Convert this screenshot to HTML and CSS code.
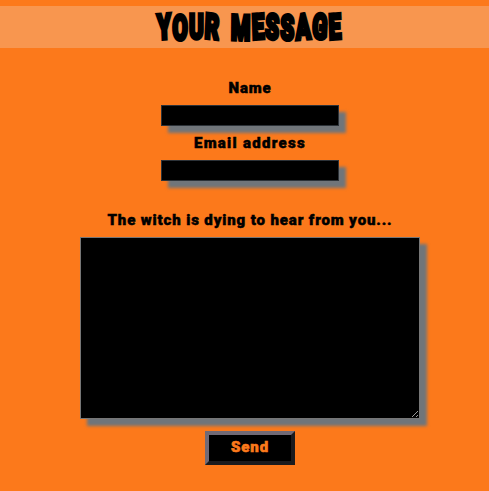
FILE: index.html
```
<!DOCTYPE html>
<html lang="en">
<head>
<meta charset="utf-8">
<title>Your message</title>
<link rel="stylesheet" href="styles.css">
</head>
<body>
<h1 class="title"><span class="title-text"><span class="left">Y</span><span class="low">O</span>U<span class="right">R</span> <span class="low">M</span><span class="left">E</span><span class="right">S</span><span class="low">S</span><span class="left">A</span><span class="right">G</span><span class="left">E</span></span></h1>
<form class="form">
<label class="label name" for="name">Name</label>
<input class="field" id="name" type="text">
<label class="label email" for="email">Email address</label>
<input class="field" id="email" type="text">
<label class="label message-label" for="message">The witch is dying to hear from you...</label>
<textarea class="message" id="message"></textarea>
<button class="send" type="button">Send</button>
</form>
</body>
</html>
```
FILE: styles.css
```
* { box-sizing: border-box; }
body {
  margin: 0;
  padding-top: 6px;
  height: 491px;
  overflow: hidden;
  background: #fc791b;
  color: #000;
  font-family: Roboto, "Liberation Sans", sans-serif;
}
.title {
  display: flex;
  justify-content: center;
  margin: 0;
  padding-left: 10px;
  height: 42px;
  background: #f8964f;
  font-size: 35px;
  line-height: 44px;
  font-weight: 900;
  white-space: nowrap;
}
.title-text {
  display: block;
  transform: scaleX(0.635);
  letter-spacing: 2px;
  word-spacing: 5px;
  -webkit-text-stroke: 3.6px #000;
}
.left, .right, .low { display: inline-block; }
.left { transform: rotate(-3deg); }
.right { transform: rotate(4deg); }
.low { transform: translateY(1px) rotate(1deg); }
.form {
  display: flex;
  flex-direction: column;
  align-items: center;
  width: 340px;
  margin: 30px 0 0 80px;
}
.label {
  height: 20px;
  margin-bottom: 7px;
  font-size: 15px;
  line-height: 20px;
  font-weight: 900;
  white-space: nowrap;
  -webkit-text-stroke: 0.5px #000;
}
.name { letter-spacing: 0.8px; }
.email { letter-spacing: 1.3px; }
.message-label { letter-spacing: 0.87px; margin-top: 22px; }
.field {
  width: 178px;
  height: 21px;
  margin: 0 0 7px;
  border: 1px solid #2c3238;
  background: #000;
  color: #fc791b;
  box-shadow: 7px 7px 3px #70757a;
}
.message {
  display: block;
  width: 340px;
  height: 182px;
  margin: 0;
  border: 1px solid #767676;
  background: #000;
  color: #fc791b;
  resize: both;
  box-shadow: 7px 7px 3px #70757a;
}
.send {
  width: 90px;
  height: 34px;
  margin: 12px 0 0;
  padding: 0 0 2px;
  border: 4px solid;
  border-color: #716a76 #1b1b1e #1b1b1e #716a76;
  background: #000;
  color: #fc791b;
  font: 900 15px/24px Roboto, sans-serif;
  letter-spacing: 0.9px;
  -webkit-text-stroke: 0.6px #fc791b;
}
```
